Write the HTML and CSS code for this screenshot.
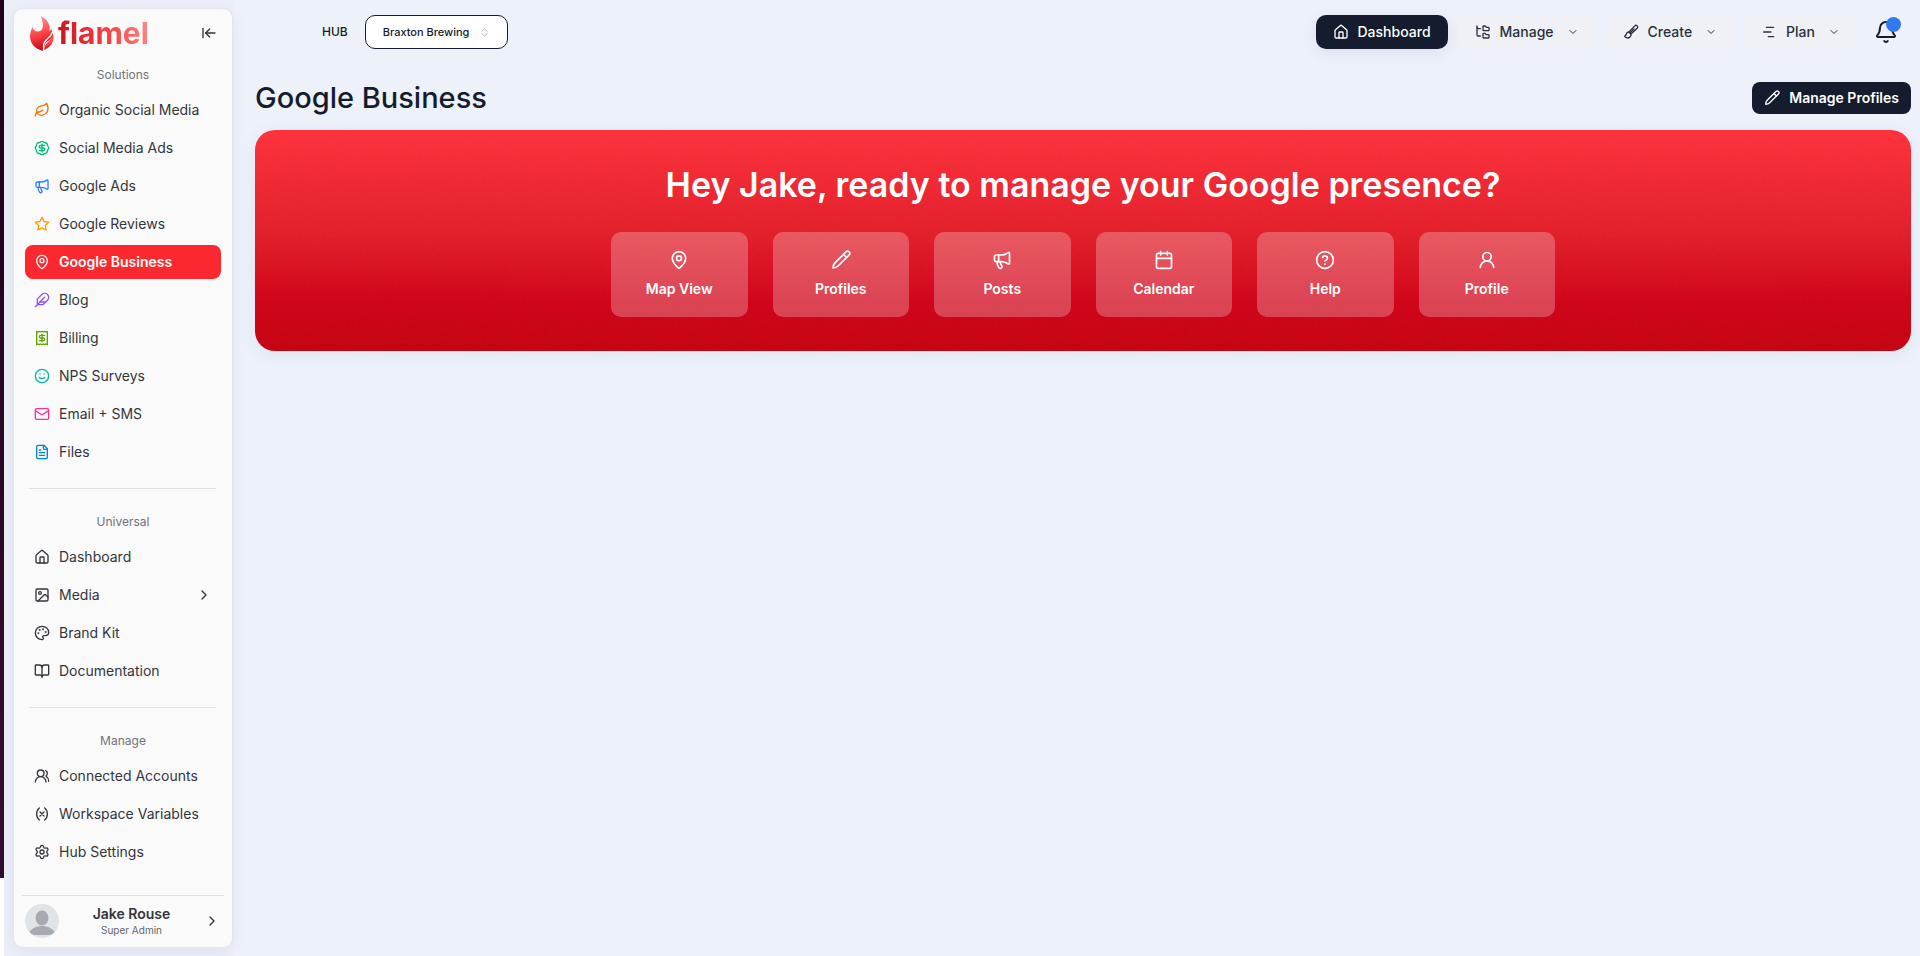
FILE: index.html
```html
<!DOCTYPE html>
<html lang="en">
<head>
<meta charset="utf-8">
<meta name="viewport" content="width=device-width, initial-scale=1">
<title>Google Business</title>
<link rel="stylesheet" href="styles.css">
</head>
<body>
<svg class="defs" aria-hidden="true">
  <defs>
    <linearGradient id="flame" x1="0.3" y1="0" x2="0.5" y2="1"><stop offset="0" stop-color="#ff9d97"/><stop offset="0.55" stop-color="#fb3f42"/><stop offset="1" stop-color="#c10716"/></linearGradient>
    <symbol id="i-home" viewBox="0 0 24 24"><path d="M15 21v-8a1 1 0 0 0-1-1h-4a1 1 0 0 0-1 1v8"/><path d="M3 10a2 2 0 0 1 .709-1.528l7-5.999a2 2 0 0 1 2.582 0l7 5.999A2 2 0 0 1 21 10v9a2 2 0 0 1-2 2H5a2 2 0 0 1-2-2z"/></symbol>
    <symbol id="i-pin" viewBox="0 0 24 24"><path d="M20 10c0 4.993-5.539 10.193-7.399 11.799a1 1 0 0 1-1.202 0C9.539 20.193 4 14.993 4 10a8 8 0 0 1 16 0"/><circle cx="12" cy="10" r="3"/></symbol>
    <symbol id="i-horn" viewBox="0 0 24 24"><path d="M11 6a13 13 0 0 0 8.400-2.800A1 1 0 0 1 21 4v12a1 1 0 0 1-1.600.8A13 13 0 0 0 11 14H5a2 2 0 0 1-2-2V8a2 2 0 0 1 2-2z"/><path d="M6 14a12 12 0 0 0 2.400 7.200 2 2 0 0 0 3.200-2.400A8 8 0 0 1 10 14"/><path d="M8 6v8"/></symbol>
    <symbol id="i-pencil" viewBox="0 0 24 24"><path d="M18 2.300a2.600 2.600 0 0 1 3.700 3.700L8.500 19.200C7 20.700 4.500 21.500 2.500 21.500 2.500 19.500 3.300 17 4.800 15.500Z"/><path d="m15 5.300 3.700 3.700"/></symbol>
    <symbol id="i-right" viewBox="0 0 24 24"><path d="m9 18 6-6-6-6"/></symbol>
    <symbol id="i-down" viewBox="0 0 24 24"><path d="m6 9 6 6 6-6"/></symbol>
  </defs>
</svg>
<div class="app">
  <div class="rail"></div>
  <aside class="sidebar">
    <div class="brand">
      <a class="logo" href="#">
        <svg class="flame" viewBox="0 0 24 35" aria-hidden="true"><path fill="url(#flame)" d="M10.500 0C18 3.500 20.500 9 19.500 15.500C20.500 14.800 20.900 13.600 20.900 12.300C23 16 23.600 19 22.700 22L16 26.500C14.500 28.500 14.200 31 14.600 34C13.500 34.600 12.600 34.900 11.500 34.500C5 32.500 0 27.500 0 20.500C0 16 1.500 13.500 2.400 11C3.500 14 5.500 15.800 8 15.500C12.500 15 13.500 11 12.700 7C12.300 4.500 11.500 2 10.500 0Z"/><path fill="url(#flame)" d="M23.500 19C24.500 25 21 31 14.500 34C14 26 21 26 23.500 19Z"/><path fill="none" stroke="#fafafa" stroke-width="1.300" d="M22.500 16C21 22 14 23.500 13.600 29V35"/></svg>
        <span class="wordmark">flamel</span>
      </a>
      <button class="plain" type="button" aria-label="Collapse sidebar"><svg class="ico" viewBox="0 0 24 24"><path d="M3 19V5"/><path d="m13 6-6 6 6 6"/><path d="M7 12h14"/></svg></button>
    </div>
    <nav class="groups" aria-label="Main">
      <section class="group">
        <h2 class="label">Solutions</h2>
        <a class="item" href="#"><svg class="ico orange" viewBox="0 0 24 24"><path d="M11 20A7 7 0 0 1 9.800 6.100C15.500 5 17 4.480 19 2c1 2 2 4.180 2 8 0 5.500-4.780 10-10 10Z"/><path d="M2 21c0-3 1.850-5.360 5.080-6C9.500 14.520 12 13 13 12"/></svg>Organic Social Media</a>
        <a class="item" href="#"><svg class="ico green" viewBox="0 0 24 24"><path d="M3.850 8.620a4 4 0 0 1 4.780-4.770 4 4 0 0 1 6.740 0 4 4 0 0 1 4.780 4.780 4 4 0 0 1 0 6.740 4 4 0 0 1-4.770 4.780 4 4 0 0 1-6.750 0 4 4 0 0 1-4.780-4.770 4 4 0 0 1 0-6.760Z"/><path d="M16 8h-6a2 2 0 1 0 0 4h4a2 2 0 1 1 0 4H8"/><path d="M12 18V6"/></svg>Social Media Ads</a>
        <a class="item" href="#"><svg class="ico blue"><use href="#i-horn"/></svg>Google Ads</a>
        <a class="item" href="#"><svg class="ico amber" viewBox="0 0 24 24"><path d="m12 2 3.090 6.260L22 9.270l-5 4.870 1.180 6.880L12 17.770l-6.180 3.250L7 14.140 2 9.270l6.910-1.010z"/></svg>Google Reviews</a>
        <a class="item active" href="#" aria-current="page"><svg class="ico"><use href="#i-pin"/></svg>Google Business</a>
        <a class="item" href="#"><svg class="ico violet" viewBox="0 0 24 24"><path d="M12.670 19a2 2 0 0 0 1.416-.588l6.154-6.172a6 6 0 0 0-8.490-8.490L5.586 9.914A2 2 0 0 0 5 11.328V18a1 1 0 0 0 1 1z"/><path d="M16 8 2 22"/><path d="M17.500 15H9"/></svg>Blog</a>
        <a class="item" href="#"><svg class="ico lime" viewBox="0 0 24 24"><path d="M4 2v20l2-1 2 1 2-1 2 1 2-1 2 1 2-1 2 1V2l-2 1-2-1-2 1-2-1-2 1-2-1-2 1Z"/><path d="M16 8h-6a2 2 0 1 0 0 4h4a2 2 0 1 1 0 4H8"/><path d="M12 17.500v-11"/></svg>Billing</a>
        <a class="item" href="#"><svg class="ico teal" viewBox="0 0 24 24"><circle cx="12" cy="12" r="10"/><path d="M8 14s1.500 2 4 2 4-2 4-2"/><path d="M9 9h.01M15 9h.01"/></svg>NPS Surveys</a>
        <a class="item" href="#"><svg class="ico pink" viewBox="0 0 24 24"><path d="m22 7-8.990 5.700a2 2 0 0 1-2.020 0L2 7"/><rect x="2" y="4" width="20" height="16" rx="2"/></svg>Email + SMS</a>
        <a class="item" href="#"><svg class="ico sky" viewBox="0 0 24 24"><path d="M15 2H6a2 2 0 0 0-2 2v16a2 2 0 0 0 2 2h12a2 2 0 0 0 2-2V7Z"/><path d="M14 2v4a2 2 0 0 0 2 2h4M10 9H8M16 13H8M16 17H8"/></svg>Files</a>
      </section>
      <section class="group">
        <h2 class="label">Universal</h2>
        <a class="item" href="#"><svg class="ico"><use href="#i-home"/></svg>Dashboard</a>
        <a class="item" href="#"><svg class="ico" viewBox="0 0 24 24"><rect x="3" y="3" width="18" height="18" rx="2"/><circle cx="9" cy="9" r="2"/><path d="m21 15-3.086-3.086a2 2 0 0 0-2.828 0L6 21"/></svg>Media<svg class="ico end"><use href="#i-right"/></svg></a>
        <a class="item" href="#"><svg class="ico" viewBox="0 0 24 24"><path d="M12 22a1 1 0 0 1 0-20 10 9 0 0 1 10 9 5 5 0 0 1-5 5h-2.250a1.750 1.750 0 0 0-1.400 2.800l.3.400a1.750 1.750 0 0 1-1.400 2.800z"/><g fill="currentColor"><circle cx="13.500" cy="6.500" r=".5"/><circle cx="17.500" cy="10.500" r=".5"/><circle cx="6.500" cy="12.500" r=".5"/><circle cx="8.500" cy="7.500" r=".5"/></g></svg>Brand Kit</a>
        <a class="item" href="#"><svg class="ico" viewBox="0 0 24 24"><path d="M12 7v14"/><path d="M3 18a1 1 0 0 1-1-1V4a1 1 0 0 1 1-1h5a4 4 0 0 1 4 4 4 4 0 0 1 4-4h5a1 1 0 0 1 1 1v13a1 1 0 0 1-1 1h-6a3 3 0 0 0-3 3 3 3 0 0 0-3-3z"/></svg>Documentation</a>
      </section>
      <section class="group">
        <h2 class="label">Manage</h2>
        <a class="item" href="#"><svg class="ico" viewBox="0 0 24 24"><path d="M18 21a8 8 0 0 0-16 0"/><circle cx="10" cy="8" r="5"/><path d="M22 20c0-3.370-2-6.500-4-8a5 5 0 0 0-.45-8.300"/></svg>Connected Accounts</a>
        <a class="item" href="#"><svg class="ico" viewBox="0 0 24 24"><path d="M8 21s-4-3-4-9 4-9 4-9"/><path d="M16 3s4 3 4 9-4 9-4 9"/><path d="m15 9-6 6M9 9l6 6"/></svg>Workspace Variables</a>
        <a class="item" href="#"><svg class="ico" viewBox="0 0 24 24"><path d="M9.671 4.136a2.340 2.340 0 0 1 4.659 0 2.340 2.340 0 0 0 3.319 1.915 2.340 2.340 0 0 1 2.330 4.033 2.340 2.340 0 0 0 0 3.831 2.340 2.340 0 0 1-2.330 4.033 2.340 2.340 0 0 0-3.319 1.915 2.340 2.340 0 0 1-4.659 0 2.340 2.340 0 0 0-3.320-1.915 2.340 2.340 0 0 1-2.330-4.033 2.340 2.340 0 0 0 0-3.831A2.340 2.340 0 0 1 6.350 6.051a2.340 2.340 0 0 0 3.319-1.915"/><circle cx="12" cy="12" r="3"/></svg>Hub Settings</a>
      </section>
    </nav>
    <button class="user" type="button">
      <svg class="avatar" viewBox="0 0 34 34" aria-hidden="true"><circle cx="17" cy="17" r="17" fill="#e1e4e6"/><ellipse cx="17" cy="14" rx="6.500" ry="7.500" fill="#a5abb0"/><path d="M4.500 28C7 24 12 22 17 22S27 24 29.500 28Q27 31 25 31H9Q7 31 4.500 28Z" fill="#a5abb0"/></svg>
      <span class="who"><strong class="name">Jake Rouse</strong><span class="role">Super Admin</span></span>
      <svg class="ico"><use href="#i-right"/></svg>
    </button>
  </aside>
  <main class="main">
    <header class="topbar">
      <div class="hub">
        <label class="hub-label" for="hub">HUB</label>
        <span class="picker">
          <select id="hub" class="select"><option>Braxton Brewing</option></select>
          <svg class="updown" viewBox="0 0 24 24" aria-hidden="true"><path d="m5 9 7-7 7 7M5 15l7 7 7-7"/></svg>
        </span>
      </div>
      <nav class="tabs" aria-label="Workspace">
        <a class="tab current" href="#"><svg class="ico"><use href="#i-home"/></svg>Dashboard</a>
        <button class="tab" type="button"><svg class="ico" viewBox="0 0 24 24"><path d="M20 10a1 1 0 0 0 1-1V6a1 1 0 0 0-1-1h-2.500a1 1 0 0 1-.8-.4l-.9-1.200A1 1 0 0 0 15 3h-2a1 1 0 0 0-1 1v5a1 1 0 0 0 1 1Z"/><path d="M20 21a1 1 0 0 0 1-1v-3a1 1 0 0 0-1-1h-2.900a1 1 0 0 1-.88-.55l-.42-.85a1 1 0 0 0-.92-.6H13a1 1 0 0 0-1 1v5a1 1 0 0 0 1 1Z"/><path d="M3 5a2 2 0 0 0 2 2h3"/><path d="M3 3v13a2 2 0 0 0 2 2h3"/></svg>Manage<svg class="chev"><use href="#i-down"/></svg></button>
        <button class="tab" type="button"><svg class="ico" viewBox="0 0 24 24"><path d="m9 12 8.700-9.200a2.400 2.400 0 0 1 3.500 3.500L12 15"/><path d="m10.500 13.500 6-6"/><path d="M9 12c-1.200 0-2 .3-3 1.200C4.500 14.500 5 17 2.500 18.500 3.500 21 8 22 10.500 19.500 12 18 12.300 16.500 12 15Z"/></svg>Create<svg class="chev"><use href="#i-down"/></svg></button>
        <button class="tab" type="button"><svg class="ico" viewBox="0 0 24 24"><path d="M8 5h11M4 12h11M11 19h8"/></svg>Plan<svg class="chev"><use href="#i-down"/></svg></button>
        <button class="bell" type="button" aria-label="Notifications"><svg class="bell-ico" viewBox="0 0 24 24"><path d="M10.268 21a2 2 0 0 0 3.464 0"/><path d="M3.262 15.326A1 1 0 0 0 4 17h16a1 1 0 0 0 .74-1.673C19.410 13.956 18 12.499 18 8A6 6 0 0 0 6 8c0 4.499-1.411 5.956-2.738 7.326"/></svg><span class="dot"></span></button>
      </nav>
    </header>
    <div class="heading">
      <h1 class="title">Google Business</h1>
      <button class="action" type="button"><svg class="ico"><use href="#i-pencil"/></svg>Manage Profiles</button>
    </div>
    <section class="hero">
      <svg class="grain" aria-hidden="true"><filter id="noise"><feTurbulence type="fractalNoise" baseFrequency="0.8" numOctaves="3"/><feColorMatrix type="saturate" values="0"/></filter><rect width="100%" height="100%" filter="url(#noise)"/></svg>
      <h2 class="greeting">Hey Jake, ready to manage your Google presence?</h2>
      <div class="tiles">
        <a class="tile" href="#"><svg class="tile-ico"><use href="#i-pin"/></svg>Map View</a>
        <a class="tile" href="#"><svg class="tile-ico"><use href="#i-pencil"/></svg>Profiles</a>
        <a class="tile" href="#"><svg class="tile-ico"><use href="#i-horn"/></svg>Posts</a>
        <a class="tile" href="#"><svg class="tile-ico" viewBox="0 0 24 24"><path d="M8 2v4M16 2v4M3 10h18"/><rect x="3" y="4" width="18" height="18" rx="2"/></svg>Calendar</a>
        <a class="tile" href="#"><svg class="tile-ico" viewBox="0 0 24 24"><circle cx="12" cy="12" r="10"/><path d="M9.090 9a3 3 0 0 1 5.830 1c0 2-3 3-3 3M12 17h.01"/></svg>Help</a>
        <a class="tile" href="#"><svg class="tile-ico" viewBox="0 0 24 24"><circle cx="12" cy="8" r="5"/><path d="M20 21a8 8 0 0 0-16 0"/></svg>Profile</a>
      </div>
    </section>
  </main>
</div>
</body>
</html>
```
FILE: styles.css
```css
* { box-sizing: border-box; }

body {
  margin: 0;
  background: #fff;
  color: #34353c;
  font: 400 14px/20px Inter, "Liberation Sans", sans-serif;
}

a { color: inherit; text-decoration: none; }
button { border: 0; background: none; padding: 0; font: inherit; color: inherit; cursor: pointer; }
h1, h2 { margin: 0; }

svg { fill: none; stroke: currentColor; stroke-width: 2; stroke-linecap: round; stroke-linejoin: round; flex: none; }
.defs { position: absolute; width: 0; height: 0; }
.ico { width: 16px; height: 16px; }

.app { display: flex; min-height: 100vh; }
.rail { width: 4px; margin-bottom: 78px; background: linear-gradient(#22031c, #320d31); }

/* Sidebar */
.sidebar {
  position: relative;
  width: 220px;
  display: flex;
  flex-direction: column;
  padding: 7px 8px 9px;
  border: 1px solid #e4e6ec;
  border-radius: 10px;
  background: #fafafa;
  box-shadow: 0 4px 16px rgb(30 40 80 / 6%);
  margin: 8px 1px 8px 9px;
  flex: none;
}
.sidebar::before {
  content: "";
  position: absolute;
  inset: -9px -2px -9px -10px;
  z-index: -2;
  background: #ebeff8;
}
.brand { display: flex; justify-content: space-between; align-items: center; height: 34px; padding: 0 7px 0 8px; }
.logo { display: flex; align-items: center; gap: 4px; }
.flame { width: 24px; height: 35px; stroke: none; }
.wordmark {
  font-size: 30px;
  line-height: 36px;
  font-weight: 700;
  color: transparent;
  background: linear-gradient(75deg, #c8101e, #fb3f42 55%, #ff8d88);
  background-clip: text;
  -webkit-background-clip: text;
}
.plain { display: flex; }
.groups { flex: 1; padding: 0 3px; }
.group { display: flex; flex-direction: column; gap: 4px; }
.group + .group { margin-top: 19px; padding-top: 18px; position: relative; }
.group + .group::before { content: ""; position: absolute; top: 0; left: 4px; right: 5px; border-top: 1px solid #e0e2ea; }
.label { height: 30px; padding-top: 8px; text-align: center; font-size: 12px; line-height: 16px; font-weight: 400; color: #71727a; }
.group:first-child .label { height: 39px; padding-top: 17px; }
.item { display: flex; align-items: center; gap: 9px; height: 34px; padding: 0 9px; border-radius: 8px; }
.item.active { background: #fc2830; color: #fff; font-weight: 600; }
.end { margin-left: auto; }
.orange { color: #ff6900; }
.green { color: #00bc7d; }
.blue { color: #2b7fff; }
.amber { color: #fe9a00; }
.violet { color: #8e51ff; }
.lime { color: #5ea500; }
.teal { color: #00bba7; }
.pink { color: #f6339a; }
.sky { color: #0084d1; }

.user { display: flex; align-items: center; gap: 8px; padding: 8px 4px 0 3px; border-top: 1px solid #e0e1e4; }
.avatar { width: 34px; height: 34px; stroke: none; }
.who { flex: 1; display: flex; flex-direction: column; align-items: center; }
.name { font-size: 14px; line-height: 18px; font-weight: 600; }
.role { font-size: 10px; line-height: 14px; color: #65666d; }

/* Content */
.main { flex: 1; min-width: 0; padding: 15px 9px 0 21px; background: #edf1fa; }
.topbar { display: flex; justify-content: space-between; align-items: center; height: 34px; color: #151c2e; }
.hub { display: flex; align-items: center; gap: 17px; padding-left: 67px; }
.hub-label { font-size: 12px; font-weight: 500; }
.picker { position: relative; display: flex; align-items: center; }
.select {
  appearance: none;
  height: 34px;
  width: 143px;
  padding: 0 34px 0 17px;
  border: 1px solid #151c2e;
  border-radius: 10px;
  background: #fff;
  color: #151c2e;
  font: 500 11px/16px Inter, "Liberation Sans", sans-serif;
}
.updown { position: absolute; right: 19px; width: 9px; height: 9px; color: #999; pointer-events: none; }

.tabs { display: flex; align-items: center; gap: 10px; }
.tab { display: flex; align-items: center; gap: 9px; height: 34px; padding: 0 17px; border-radius: 10px; background: #eff1f6; font-weight: 500; color: #2a3042; }
.tab.current { background: #151c2e; color: #fff; box-shadow: 0 4px 16px rgb(30 40 80 / 8%); }
.chev { width: 12px; height: 12px; margin-left: 4px; }
.bell { position: relative; display: flex; margin: 0 13px 0 7px; }
.bell-ico { width: 24px; height: 24px; }
.dot { position: absolute; top: -3px; right: -3px; width: 15px; height: 15px; border-radius: 50%; background: #3478f0; }

.heading { display: flex; justify-content: space-between; align-items: center; margin: 32px 0 15px; color: #151c2e; }
.title { font-size: 29px; line-height: 34px; font-weight: 500; }
.action { display: flex; align-items: center; gap: 9px; height: 32px; padding: 0 12px; border-radius: 8px; background: #151c2e; color: #fff; font-weight: 600; }

.hero {
  position: relative;
  overflow: hidden;
  display: flex;
  flex-direction: column;
  align-items: center;
  gap: 25px;
  padding: 33px 24px 34px;
  border-radius: 20px;
  background: linear-gradient(#ff303a, #e31c28 48%, #d10016 78%, #c5000f);
  color: #fff;
  box-shadow: 0 4px 20px rgb(30 40 80 / 6%);
}
.grain { position: absolute; inset: 0; width: 100%; height: 100%; stroke: none; opacity: 0.06; pointer-events: none; }
.greeting { position: relative; font-size: 34px; line-height: 44px; font-weight: 600; text-align: center; }
.tiles { position: relative; display: grid; grid-template-columns: repeat(6, 1fr); gap: 25px; width: 100%; max-width: 944px; }
.tile { display: flex; flex-direction: column; align-items: center; gap: 9px; padding: 18px 8px; border-radius: 10px; background: rgb(255 255 255 / 25%); font-weight: 600; }
.tile-ico { width: 20px; height: 20px; }
```
